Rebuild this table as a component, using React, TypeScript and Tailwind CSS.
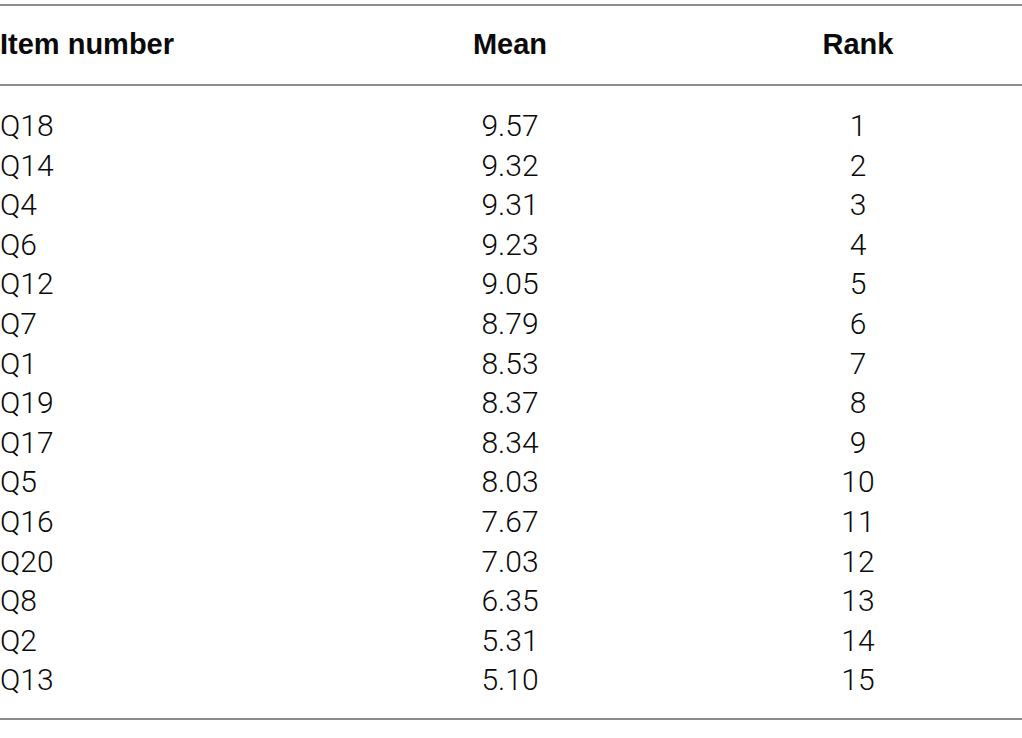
const rows = [
  ["Q18", "9.57", "1"],
  ["Q14", "9.32", "2"],
  ["Q4", "9.31", "3"],
  ["Q6", "9.23", "4"],
  ["Q12", "9.05", "5"],
  ["Q7", "8.79", "6"],
  ["Q1", "8.53", "7"],
  ["Q19", "8.37", "8"],
  ["Q17", "8.34", "9"],
  ["Q5", "8.03", "10"],
  ["Q16", "7.67", "11"],
  ["Q20", "7.03", "12"],
  ["Q8", "6.35", "13"],
  ["Q2", "5.31", "14"],
  ["Q13", "5.10", "15"],
];

export default function App() {
  return (
    <div className="min-h-[738px] w-[1022px] bg-white pt-[4px] text-[#0a0a0a]">
      <div className="border-y-2 border-[#8c8c8c]">
        <div className="grid h-[78px] grid-cols-[340px_340px_1fr] items-center font-['Liberation_Sans',Arial,sans-serif] text-[29px] font-bold">
          <div>Item number</div>
          <div className="text-center">Mean</div>
          <div className="pl-[14px] text-center">Rank</div>
        </div>
      </div>
      <div className="border-b-2 border-[#8c8c8c] pt-[17px] pb-[21px] font-['Roboto',sans-serif] text-[30px] font-light">
        {rows.map(([item, mean, rank]) => (
          <div key={item} className="grid h-[39.6px] grid-cols-[340px_340px_1fr] items-center">
            <div>{item}</div>
            <div className="text-center">{mean}</div>
            <div className="pl-[14px] text-center">{rank}</div>
          </div>
        ))}
      </div>
    </div>
  );
}
